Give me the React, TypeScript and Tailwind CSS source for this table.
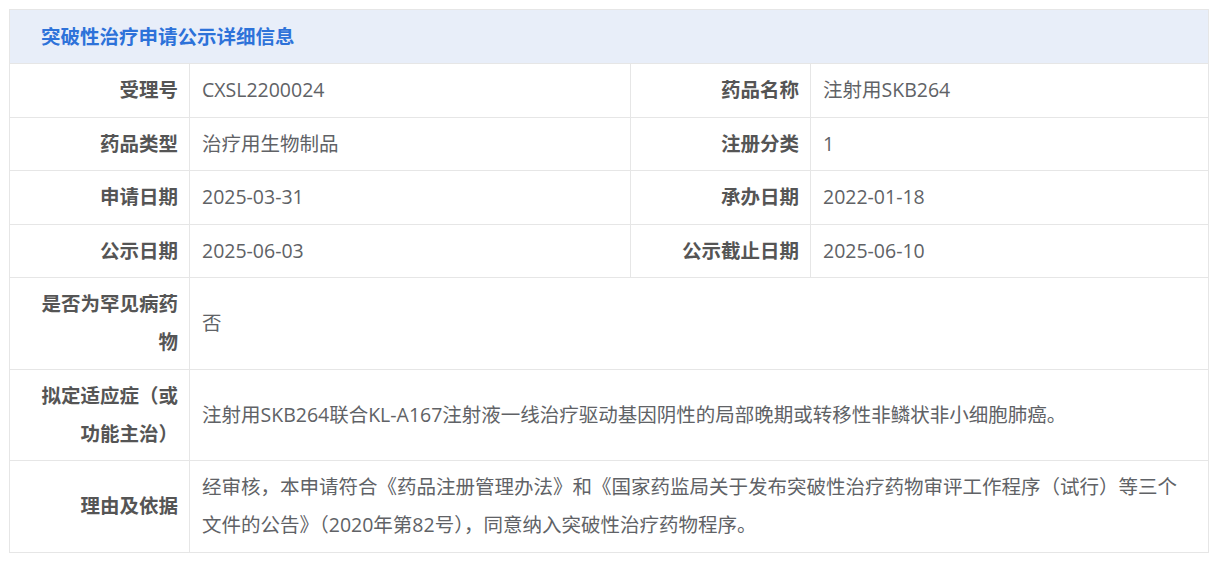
import React from "react";

interface Field {
  label: string;
  value: string;
}

const pairs: [Field, Field][] = [
  [
    { label: "受理号", value: "CXSL2200024" },
    { label: "药品名称", value: "注射用SKB264" },
  ],
  [
    { label: "药品类型", value: "治疗用生物制品" },
    { label: "注册分类", value: "1" },
  ],
  [
    { label: "申请日期", value: "2025-03-31" },
    { label: "承办日期", value: "2022-01-18" },
  ],
  [
    { label: "公示日期", value: "2025-06-03" },
    { label: "公示截止日期", value: "2025-06-10" },
  ],
];

const wide: Field[] = [
  { label: "是否为罕见病药物", value: "否" },
  {
    label: "拟定适应症（或功能主治）",
    value:
      "注射用SKB264联合KL-A167注射液一线治疗驱动基因阴性的局部晚期或转移性非鳞状非小细胞肺癌。",
  },
  {
    label: "理由及依据",
    value:
      "经审核，本申请符合《药品注册管理办法》和《国家药监局关于发布突破性治疗药物审评工作程序（试行）等三个文件的公告》（2020年第82号），同意纳入突破性治疗药物程序。",
  },
];

const labelCls =
  "border border-[#e6e6e6] pl-6 pr-[11px] py-[7.25px] text-right align-middle font-bold text-[#555]";
const valueCls =
  "border border-[#e6e6e6] pl-3 pr-5 py-[7.25px] text-left align-middle text-[#606266]";

export default function App() {
  return (
    <div
      className="min-h-screen bg-white pl-[9px] pt-[9px]"
      style={{ fontFamily: '"Open Sans", "Noto Sans CJK SC", sans-serif' }}
    >
      <div className="w-[1200px] text-[19.5px] leading-[38px]">
        <div className="flex h-[54px] items-center border border-b-0 border-[#e6e6e6] bg-[#e8eef9] pl-[31px]">
          <h2 className="text-[19.5px] font-bold text-[#2d72d9]">突破性治疗申请公示详细信息</h2>
        </div>
        <table className="w-full table-fixed border-collapse">
          <colgroup>
            <col className="w-[180px]" />
            <col className="w-[441px]" />
            <col className="w-[180px]" />
            <col />
          </colgroup>
          <tbody>
            {pairs.map(([a, b]) => (
              <tr key={a.label}>
                <td className={labelCls}>{a.label}</td>
                <td className={valueCls}>{a.value}</td>
                <td className={labelCls}>{b.label}</td>
                <td className={valueCls}>{b.value}</td>
              </tr>
            ))}
            {wide.map((f) => (
              <tr key={f.label}>
                <td className={labelCls}>{f.label}</td>
                <td className={valueCls} colSpan={3}>
                  {f.value}
                </td>
              </tr>
            ))}
          </tbody>
        </table>
      </div>
    </div>
  );
}
